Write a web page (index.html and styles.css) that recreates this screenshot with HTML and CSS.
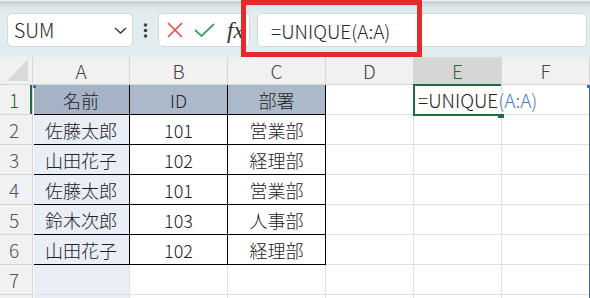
FILE: index.html
```html
<!DOCTYPE html>
<html lang="ja">
<head>
    <meta charset="UTF-8">
    <title>UNIQUE</title>
    <link rel="stylesheet" href="styles.css">
</head>
<body>
<div class="toolbar">
    <div class="namebox">
        <span>SUM</span>
        <svg class="chevron" width="13" height="7" viewBox="0 0 13 7">
            <polyline points="1,1 6.5,6 12,1" fill="none" stroke="#333" stroke-width="1.3"/>
        </svg>
    </div>
    <svg class="dots" width="5" height="15" viewBox="0 0 5 15">
        <circle cx="2.5" cy="2" r="1.8" fill="#444"/>
        <circle cx="2.5" cy="7.5" r="1.8" fill="#444"/>
        <circle cx="2.5" cy="13" r="1.8" fill="#444"/>
    </svg>
    <div class="fxbox">
        <svg width="16" height="16" viewBox="0 0 16 16">
            <path d="M1 1 L15 15 M15 1 L1 15" stroke="#e24a4a" stroke-width="1.6" fill="none"/>
        </svg>
        <svg class="check" width="21" height="14" viewBox="0 0 21 14">
            <polyline points="1,7 7.5,13 20,1" fill="none" stroke="#3da35b" stroke-width="1.8"/>
        </svg>
        <span class="fx">fx</span>
    </div>
    <div class="formula">=UNIQUE(A:A)</div>
</div>

<div class="sheet">
    <!-- header row -->
    <div class="c h corner"><div class="tri"></div></div>
    <div class="c h">A</div>
    <div class="c h">B</div>
    <div class="c h">C</div>
    <div class="c h">D</div>
    <div class="c h sel">E</div>
    <div class="c h">F</div>

    <!-- 1 -->
    <div class="c r act">1</div>
    <div class="c t ta th">名前</div>
    <div class="c t th">ID</div>
    <div class="c t th">部署</div>
    <div class="c"></div>
    <div class="c active"><span>=UNIQUE</span><span class="ref">(A:A)</span></div>
    <div class="c"></div>

    <!-- 2 -->
    <div class="c r">2</div>
    <div class="c t ta">佐藤太郎</div>
    <div class="c t">101</div>
    <div class="c t">営業部</div>
    <div class="c"></div><div class="c"></div><div class="c"></div>

    <!-- 3 -->
    <div class="c r">3</div>
    <div class="c t ta">山田花子</div>
    <div class="c t">102</div>
    <div class="c t">経理部</div>
    <div class="c"></div><div class="c"></div><div class="c"></div>

    <!-- 4 -->
    <div class="c r">4</div>
    <div class="c t ta">佐藤太郎</div>
    <div class="c t">101</div>
    <div class="c t">営業部</div>
    <div class="c"></div><div class="c"></div><div class="c"></div>

    <!-- 5 -->
    <div class="c r">5</div>
    <div class="c t ta">鈴木次郎</div>
    <div class="c t">103</div>
    <div class="c t">人事部</div>
    <div class="c"></div><div class="c"></div><div class="c"></div>

    <!-- 6 -->
    <div class="c r">6</div>
    <div class="c t ta">山田花子</div>
    <div class="c t">102</div>
    <div class="c t">経理部</div>
    <div class="c"></div><div class="c"></div><div class="c"></div>

    <!-- 7 -->
    <div class="c r">7</div>
    <div class="c a"></div>
    <div class="c"></div><div class="c"></div><div class="c"></div><div class="c"></div><div class="c"></div>

    <!-- 8 (only its top edge is visible) -->
    <div class="c r"></div>
    <div class="c a"></div>
    <div class="c"></div><div class="c"></div><div class="c"></div><div class="c"></div><div class="c"></div>

    <!-- 参照範囲 A:A -->
    <div class="range"></div>
</div>

<div class="callout"></div>
</body>
</html>
```

FILE: styles.css
```css
* {
    margin: 0;
    padding: 0;
    box-sizing: border-box;
}

body {
    width: 590px;
    height: 298px;
    overflow: hidden;
    position: relative;
    background: #fff;
    font-family: "Noto Sans CJK JP", "Noto Sans", sans-serif;
    font-weight: 300;
    color: #222;
}

/* formula toolbar */
.toolbar {
    height: 57px;
    display: flex;
    align-items: flex-start;
    padding: 13px 0 0 7px;
    background: linear-gradient(#f5f7f7 0, #c7cfd1 2px, #dce7e9 7px, #e2edef 14px);
}

.namebox {
    width: 126px;
    height: 34px;
    background: #fff;
    border: 1px solid #d3d9da;
    border-radius: 5px;
    display: flex;
    align-items: center;
    justify-content: space-between;
    padding: 0 5px 0 6px;
    font-size: 19.5px;
    line-height: 1;
    color: #262626;
}

.dots {
    margin: 10px 0 0 10px;
}

.fxbox {
    width: 92px;
    height: 34px;
    margin-left: 10px;
    background: #fff;
    border: 1px solid #d3d9da;
    border-radius: 5px;
    display: flex;
    align-items: center;
    padding-left: 8px;
}

.check {
    margin-left: 11px;
}

.fx {
    margin-left: 12px;
    font-family: "Liberation Serif", serif;
    font-style: italic;
    font-weight: 400;
    font-size: 23px;
    color: #333;
    line-height: 1;
}

.formula {
    width: 330px;
    height: 34px;
    margin-left: 7px;
    background: #fff;
    border: 1px solid #d3d9da;
    border-radius: 5px;
    padding-left: 13px;
    display: flex;
    align-items: center;
    font-size: 19px;
    line-height: 1;
    color: #262626;
}

/* red annotation box */
.callout {
    position: absolute;
    left: 241px;
    top: 0;
    width: 181px;
    height: 57px;
    border: 5px solid #e42a2a;
}

/* sheet grid */
.sheet {
    display: grid;
    grid-template-columns: 33px 97px 98px 98px 88px 88px 88px;
    grid-template-rows: 28px repeat(8, 30px);
    position: relative;
}

.c {
    border-right: 1px solid #e0e0e0;
    border-bottom: 1px solid #e0e0e0;
    display: flex;
    align-items: center;
    justify-content: center;
    font-size: 18px;
    line-height: 1;
    white-space: nowrap;
}

.h {
    background: #f1f1f1;
    border-color: #d6d6d6;
    color: #444;
    font-size: 19px;
}

.h.sel {
    background: #d6d6d6;
    color: #1e6e42;
}

.corner {
    align-items: flex-end;
    justify-content: flex-end;
    padding: 0 4px 3px 0;
}

.tri {
    width: 21px;
    height: 22px;
    background: #d9d9d9;
    clip-path: polygon(100% 0, 100% 100%, 0 100%);
}

.r {
    background: #f1f1f1;
    border-color: #d6d6d6;
    color: #555;
    font-size: 19px;
    padding-right: 4px;
}

.r.act {
    color: #1e6e42;
    box-shadow: inset -2px 0 0 #1e6e42;
}

/* table B1:C6 */
.t {
    border-right: 1px solid #000;
    border-bottom: 1px solid #000;
}

.th {
    background: #acb9ca;
}

.ta {
    background: #e9eef7;
}

.ta.th {
    background: #a6b3c7;
}

.a {
    background: #e9eef7;
}

/* active cell E1 (edit mode, open on the right) */
.active {
    position: relative;
    justify-content: flex-start;
    padding-left: 4px;
    font-size: 19px;
    overflow: visible;
}

.active::after {
    content: '';
    position: absolute;
    top: -1px;
    left: -1px;
    right: 0;
    bottom: -2px;
    border: 2px solid #1e6e42;
    border-right: 0;
}

.active::before {
    content: '';
    position: absolute;
    right: -3px;
    bottom: -4px;
    width: 6px;
    height: 4px;
    background: #1e6e42;
    z-index: 1;
}

.ref {
    color: #4a76c8;
}

/* referenced range A:A */
.range {
    grid-column: 2;
    grid-row: 2 / -1;
    position: absolute;
    top: 0;
    bottom: 0;
    left: 0;
    right: -2px;
    border-left: 1px solid #fff;
    border-right: 3px solid #3b6fc6;
    pointer-events: none;
}

.range::before,
.range::after {
    content: '';
    position: absolute;
    top: 0;
    height: 3px;
    background: #3b6fc6;
}

.range::before {
    left: -1px;
    width: 3px;
}

.range::after {
    right: -3px;
    width: 5px;
}
```
